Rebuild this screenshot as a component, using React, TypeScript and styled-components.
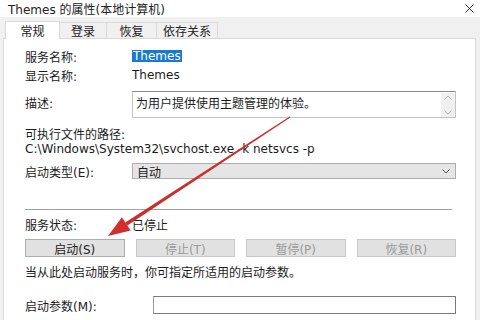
import { FC } from 'react';
import styled, { createGlobalStyle } from 'styled-components';

const Global = createGlobalStyle`
html, body { margin: 0; padding: 0; background: #fff; }
body { font: 400 12px "DejaVu Sans", "Noto Sans CJK SC", sans-serif; color: #1b1b1b; }
`

const Window = styled.div`
width: 480px;
height: 320px;
position: relative;
overflow: hidden;
background: #f0f0f0;
display: flex;
flex-direction: column;
`

const TitleBar = styled.div`
height: 17px;
background: #fff;
display: flex;
align-items: center;
justify-content: space-between;
padding: 0 6px 0 8px;
.title{ font-size: 12px; color: #222; }
`

const TabStrip = styled.div`
height: 21px;
display: flex;
align-items: flex-end;
padding-left: 5px;
`

const Tab = styled.div<{ $active?: boolean; $w: number }>`
width: ${p => p.$w}px;
height: ${p => p.$active ? 18 : 16}px;
box-sizing: border-box;
display: flex;
align-items: center;
justify-content: center;
background: ${p => p.$active ? '#fff' : '#f0f0f0'};
border: 1px solid #d9d9d9;
border-bottom: none;
margin-right: -1px;
margin-bottom: ${p => p.$active ? -1 : 0}px;
position: relative;
z-index: ${p => p.$active ? 1 : 0};
color: #222;
`

const Panel = styled.div`
flex: 1;
margin: 0 4px 0 3px;
background: #fff;
border: 1px solid #d9d9d9;
border-bottom: none;
padding: 8px 19px 0 21px;
display: flex;
flex-direction: column;
`

const Row = styled.div<{ $top?: number; $h?: number; $start?: boolean }>`
display: flex;
align-items: ${p => p.$start ? 'flex-start' : 'center'};
height: ${p => p.$h ?? 18}px;
margin-top: ${p => p.$top ?? 0}px;
flex-shrink: 0;
white-space: nowrap;
`

const Label = styled.div<{ $w?: number; $pt?: number }>`
width: ${p => p.$w ?? 107}px;
flex-shrink: 0;
padding-top: ${p => p.$pt ?? 0}px;
`

const Selected = styled.span`
background: #1979ca;
color: #fff;
padding: 0 1px;
line-height: 12px;
`

const TextArea = styled.div`
flex: 1;
height: 27px;
box-sizing: border-box;
border: 1px solid #c4c4c4;
border-top-color: #8a8a8a;
display: flex;
padding: 2px 0 0 3px;
.txt{ flex: 1; }
`

const ScrollBar = styled.div`
width: 14px;
margin-top: -1px;
background: #f0f0f0;
display: flex;
flex-direction: column;
align-items: center;
justify-content: space-between;
padding: 2px 0;
`

const Select = styled.div`
flex: 1;
height: 16px;
box-sizing: border-box;
background: #e5e5e5;
border: 1px solid #adadad;
display: flex;
align-items: center;
justify-content: space-between;
padding: 0 5px 0 4px;
`

const Separator = styled.div`
height: 1px;
background: #a0a0a0;
margin: 30px 4px 0 0;
`

const Buttons = styled.div`
display: grid;
grid-template-columns: repeat(4, 1fr);
gap: 11px;
margin-top: 7px;
`

const Button = styled.div<{ $disabled?: boolean }>`
height: 18px;
box-sizing: border-box;
background: #e1e1e1;
border: 1px solid ${p => p.$disabled ? '#c8c8c8' : '#adadad'};
display: flex;
align-items: center;
justify-content: center;
color: ${p => p.$disabled ? '#9a9a9a' : '#222'};
`

const Input = styled.div`
flex: 1;
height: 18px;
box-sizing: border-box;
border: 1px solid #7a7a7a;
border-left-color: #9a9a9a;
background: #fff;
`

const Overlay = styled.svg`
position: absolute;
left: 0;
top: 0;
pointer-events: none;
`

const Chevron: FC<{ up?: boolean; color?: string }> = ({ up, color = '#b5b5b5' }) => (
  <svg width="8" height="5" viewBox="0 0 8 5">
    <path d={up ? 'M0.5 4.5 L4 1 L7.5 4.5' : 'M0.5 0.5 L4 4 L7.5 0.5'} fill="none" stroke={color} strokeWidth="1" />
  </svg>
)

export default function App() {
  return (
    <Window>
      <Global />
      <TitleBar>
        <span className="title">Themes 的属性(本地计算机)</span>
        <svg width="9" height="9" viewBox="0 0 9 9">
          <path d="M0.5 0.5 L8.5 8.5 M8.5 0.5 L0.5 8.5" stroke="#333" strokeWidth="1" />
        </svg>
      </TitleBar>
      <TabStrip>
        <Tab $active $w={55}>常规</Tab>
        <Tab $w={48}>登录</Tab>
        <Tab $w={51}>恢复</Tab>
        <Tab $w={62}>依存关系</Tab>
      </TabStrip>
      <Panel>
        <Row>
          <Label>服务名称:</Label>
          <Selected>Themes</Selected>
        </Row>
        <Row $top={1}>
          <Label>显示名称:</Label>
          <span>Themes</span>
        </Row>
        <Row $top={7} $h={27} $start>
          <Label $pt={3}>描述:</Label>
          <TextArea>
            <span className="txt">为用户提供使用主题管理的体验。</span>
            <ScrollBar>
              <Chevron up />
              <Chevron />
            </ScrollBar>
          </TextArea>
        </Row>
        <Row $top={7} $h={16}>可执行文件的路径:</Row>
        <Row $h={16}>C:\Windows\System32\svchost.exe -k netsvcs -p</Row>
        <Row $top={6} $h={16}>
          <Label>启动类型(E):</Label>
          <Select>
            <span>自动</span>
            <Chevron color="#555" />
          </Select>
        </Row>
        <Separator />
        <Row $top={6} $h={16}>
          <Label>服务状态:</Label>
          <span>已停止</span>
        </Row>
        <Buttons>
          <Button>启动(S)</Button>
          <Button $disabled>停止(T)</Button>
          <Button $disabled>暂停(P)</Button>
          <Button $disabled>恢复(R)</Button>
        </Buttons>
        <Row $top={6} $h={16}>当从此处启动服务时，你可指定所适用的启动参数。</Row>
        <Row $top={17}>
          <Label $w={128}>启动参数(M):</Label>
          <Input />
        </Row>
      </Panel>
      <Overlay width="480" height="320" viewBox="0 0 480 320">
        <polygon
          points="290.3,117.4 289.7,116.6 125.2,222.6 127.4,225.4"
          fill="#c9302c"
        />
        <polygon points="108,236 121.9,217.2 130.7,230.6" fill="#d12f2b" />
      </Overlay>
    </Window>
  );
}
